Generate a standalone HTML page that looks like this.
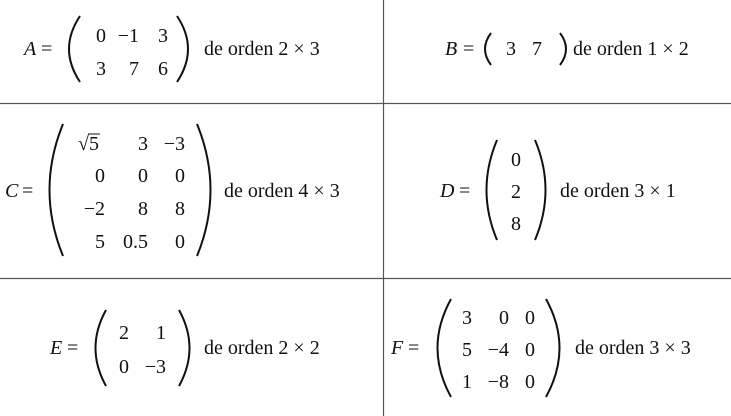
<!DOCTYPE html>
<html><head><meta charset="utf-8"><style>
html,body{margin:0;padding:0;background:#fff;width:731px;height:416px;overflow:hidden}
svg{display:block}
text{font-family:"Liberation Serif",serif;font-size:20px;fill:#111}
.i{font-style:italic}
path{fill:none;stroke:#111;stroke-width:2}
</style></head><body>
<svg width="731" height="416" viewBox="0 0 731 416">
<line x1="0" y1="103.5" x2="731" y2="103.5" stroke="#555" stroke-width="1.2"/>
<line x1="0" y1="278.5" x2="731" y2="278.5" stroke="#555" stroke-width="1.2"/>
<line x1="383.5" y1="0" x2="383.5" y2="416" stroke="#555" stroke-width="1.2"/>

<!-- A -->
<text x="24" y="55" class="i">A</text><text x="41" y="55">=</text>
<path d="M80,16 Q58,49 80,82"/><path d="M177,16 Q199,49 177,82"/>
<g text-anchor="end">
<text x="106" y="42">0</text><text x="139" y="42">−1</text><text x="168" y="42">3</text>
<text x="106" y="75">3</text><text x="139" y="75">7</text><text x="168" y="75">6</text>
</g>
<text x="204" y="55">de orden 2 × 3</text>

<!-- B -->
<text x="445" y="55" class="i">B</text><text x="463" y="55">=</text>
<path d="M491,33 Q479,49 491,65"/><path d="M560,33 Q572,49 560,65"/>
<text x="506" y="55">3</text><text x="532" y="55">7</text>
<text x="573" y="55">de orden 1 × 2</text>

<!-- C -->
<text x="5" y="197" class="i">C</text><text x="22" y="197">=</text>
<path d="M63,124 Q36,190 63,256"/><path d="M197,124 Q224,190 197,256"/>
<g text-anchor="end">
<text x="99" y="150">√5</text>
<text x="148" y="150">3</text><text x="185" y="150">−3</text>
<text x="105" y="182">0</text><text x="148" y="182">0</text><text x="185" y="182">0</text>
<text x="105" y="215">−2</text><text x="148" y="215">8</text><text x="185" y="215">8</text>
<text x="105" y="248">5</text><text x="148" y="248">0.5</text><text x="185" y="248">0</text>
</g>
<line x1="88" y1="134" x2="100" y2="134" stroke="#111" stroke-width="1"/>
<text x="224" y="197">de orden 4 × 3</text>

<!-- D -->
<text x="440" y="197" class="i">D</text><text x="459" y="197">=</text>
<path d="M497,140 Q476,190 497,240"/><path d="M535,140 Q556,190 535,240"/>
<text x="511" y="166">0</text><text x="511" y="198">2</text><text x="511" y="230">8</text>
<text x="560" y="197">de orden 3 × 1</text>

<!-- E -->
<text x="50" y="354" class="i">E</text><text x="67" y="354">=</text>
<path d="M106,310 Q85,348 106,386"/><path d="M179,310 Q200,348 179,386"/>
<g text-anchor="end">
<text x="129" y="339">2</text><text x="166" y="339">1</text>
<text x="129" y="373">0</text><text x="166" y="373">−3</text>
</g>
<text x="204" y="354">de orden 2 × 2</text>

<!-- F -->
<text x="391" y="354" class="i">F</text><text x="408" y="354">=</text>
<path d="M451,299 Q424,348 451,397"/><path d="M546,299 Q573,348 546,397"/>
<g text-anchor="end">
<text x="472" y="324">3</text><text x="509" y="324">0</text><text x="535" y="324">0</text>
<text x="472" y="356">5</text><text x="509" y="356">−4</text><text x="535" y="356">0</text>
<text x="472" y="388">1</text><text x="509" y="388">−8</text><text x="535" y="388">0</text>
</g>
<text x="575" y="354">de orden 3 × 3</text>
</svg>
</body></html>
